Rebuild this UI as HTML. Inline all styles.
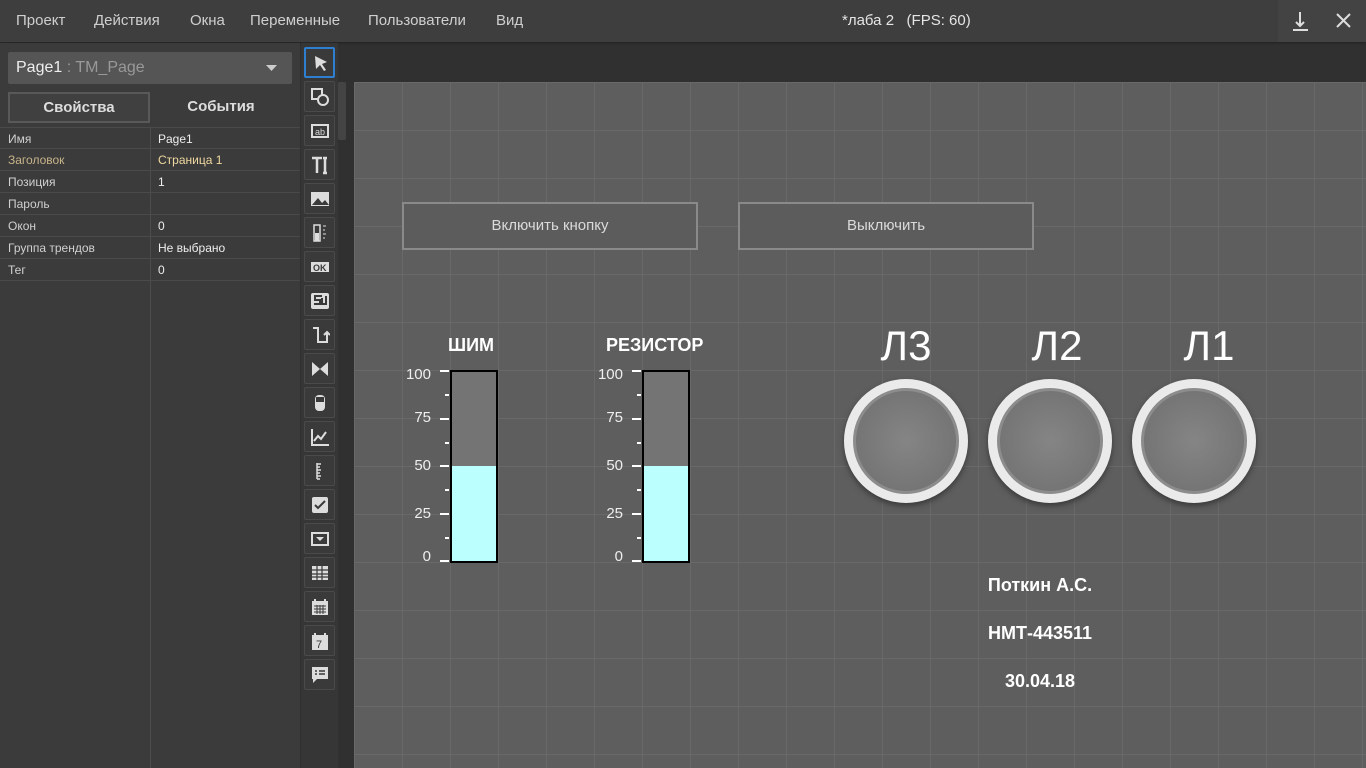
<!DOCTYPE html>
<html><head><meta charset="utf-8"><style>
*{margin:0;padding:0;box-sizing:border-box}
body{width:1366px;height:768px;overflow:hidden;background:#303030;font-family:"Liberation Sans",sans-serif;position:relative;color:#ddd}
.top{position:absolute;left:0;top:0;width:1366px;height:42px;background:#3e3e3e;box-shadow:0 1px 2px #222}
.top span{position:absolute;top:12px;font-size:15px;color:#cfcfcf}
.a{position:absolute}
.left{position:absolute;left:0;top:43px;width:300px;height:725px;background:#3b3b3b}
.row{position:absolute;left:0;width:300px;height:22px;border-bottom:1px solid #4a4a4a;font-size:12px}
.row b{position:absolute;left:8px;top:4px;font-weight:normal;color:#d0d0d0}
.row i{position:absolute;left:158px;top:4px;font-style:normal;color:#eee}
.tb{position:absolute;left:301px;top:43px;width:37px;height:725px;background:#363636}
.btn{position:absolute;left:304px;width:31px;height:31px;border:1px solid #4a4a4a;border-radius:2px;background:#3a3a3a}
.btn svg{position:absolute;left:5px;top:5px}
.canvas{position:absolute;left:354px;top:82px;width:1012px;height:686px;background-color:#5e5e5e;
background-image:linear-gradient(to right,#696969 1px,transparent 1px),linear-gradient(to bottom,#696969 1px,transparent 1px);background-size:48px 48px}
.pb{position:absolute;width:296px;height:48px;border:2px solid #8a8a8a;background:#5c5c5c;color:#dadada;font-size:15px;text-align:center;line-height:44px}
.ttl{position:absolute;font-size:18px;font-weight:bold;color:#fff}
.bar{position:absolute;width:48px;height:193px;border:2px solid #000;background:linear-gradient(to bottom,#747474 0,#747474 94px,#bbffff 94px)}
.lbl{position:absolute;width:30px;text-align:right;font-size:15px;color:#eee}
.tk{position:absolute;height:2px;background:#fff}
.lamp{position:absolute;width:124px;height:124px;border-radius:50%;background:radial-gradient(circle,#f4f4f4 0,#e8e8e8 80%,#aaa 100%);box-shadow:0 3px 6px #3a3a3a}
.lamp div{position:absolute;left:9px;top:9px;width:106px;height:106px;border-radius:50%;background:radial-gradient(circle at 50% 50%,#858585 0,#757575 70%,#6e6e6e 100%);border:3px solid #8c8c8c}
.L{position:absolute;font-size:42px;color:#fff;width:126px;text-align:center}
.inf{position:absolute;left:940px;width:200px;text-align:center;color:#fff;font-size:18px;font-weight:bold}
</style></head><body>
<div class="top">
<span style="left:16px">Проект</span><span style="left:94px">Действия</span><span style="left:190px">Окна</span><span style="left:250px">Переменные</span><span style="left:368px">Пользователи</span><span style="left:496px">Вид</span>
<span style="left:842px;color:#e5e5e5">*лаба 2 &nbsp; (FPS: 60)</span>
<div class="a" style="left:1278px;top:0;width:88px;height:42px;background:#434343"></div>
<svg class="a" style="left:1290px;top:10px" width="22" height="22"><path d="M10 2v14M6 12l4 4 4-4M3 20h15" stroke="#ddd" stroke-width="2" fill="none"/></svg>
<svg class="a" style="left:1335px;top:12px" width="18" height="18"><path d="M2 2l13 13M15 2L2 15" stroke="#ddd" stroke-width="2"/></svg>
</div>
<div class="left">
<div class="a" style="left:8px;top:9px;width:284px;height:32px;background:#555;border-radius:2px;font-size:16px;color:#eee;padding:7px 8px">Page1<span style="color:#999"> : TM_Page</span></div>
<svg class="a" style="left:266px;top:22px" width="12" height="8"><path d="M0 0h11L5.5 6z" fill="#ccc"/></svg>
<div class="a" style="left:8px;top:49px;width:142px;height:31px;border:2px solid #595959;background:#404040;font-size:15px;font-weight:bold;text-align:center;line-height:27px;color:#ddd">Свойства</div>
<div class="a" style="left:150px;top:49px;width:142px;height:31px;font-size:15px;font-weight:bold;text-align:center;line-height:29px;color:#ddd">События</div>
<div class="a" style="left:150px;top:84px;width:1px;height:641px;background:#4d4d4d"></div>
<div class="row" style="top:84px;border-top:1px solid #4a4a4a"><b>Имя</b><i>Page1</i></div>
<div class="row" style="top:106px"><b style="color:#c8b48a">Заголовок</b><i style="color:#f0d9a0">Страница 1</i></div>
<div class="row" style="top:128px"><b>Позиция</b><i>1</i></div>
<div class="row" style="top:150px"><b>Пароль</b><i></i></div>
<div class="row" style="top:172px"><b>Окон</b><i>0</i></div>
<div class="row" style="top:194px"><b>Группа трендов</b><i>Не выбрано</i></div>
<div class="row" style="top:216px"><b>Тег</b><i>0</i></div>
</div>
<div class="tb"></div>
<div class="a" style="left:338px;top:82px;width:8px;height:58px;background:#444;border-radius:2px"></div>
<div class="btn" style="top:47px;border:2px solid #2f7fd0"><svg width="20" height="20"><path d="M4 2l12 6-5 2 4 6-2 1-4-6-4 4z" fill="#ddd"/></svg></div>
<div class="btn" style="top:81px"><svg width="20" height="20"><rect x="2" y="2" width="10" height="10" fill="none" stroke="#ddd" stroke-width="2"/><circle cx="13" cy="13" r="5" fill="#3a3a3a" stroke="#ddd" stroke-width="2"/></svg></div>
<div class="btn" style="top:115px"><svg width="20" height="20"><rect x="2" y="4" width="16" height="12" fill="none" stroke="#ddd" stroke-width="2"/><text x="5" y="14" font-size="9" fill="#ddd">ab</text></svg></div>
<div class="btn" style="top:149px"><svg width="20" height="20"><path d="M2 3h10M7 3v15M15 3v15M13 3h4M13 18h4" stroke="#ddd" stroke-width="2.5" fill="none"/></svg></div>
<div class="btn" style="top:183px"><svg width="20" height="20"><rect x="1" y="3" width="18" height="14" fill="#ddd"/><path d="M2 16l6-7 4 5 3-3 4 5z" fill="#3a3a3a"/></svg></div>
<div class="btn" style="top:217px"><svg width="20" height="20"><rect x="4" y="2" width="6" height="16" fill="none" stroke="#ddd" stroke-width="1.5"/><rect x="5" y="10" width="4" height="8" fill="#ddd"/><path d="M13 3h3M13 7h2M13 11h3M13 15h2" stroke="#ddd"/></svg></div>
<div class="btn" style="top:251px"><svg width="20" height="20"><rect x="1" y="5" width="18" height="10" fill="#ddd"/><text x="3" y="14" font-size="9" font-weight="bold" fill="#3a3a3a">OK</text></svg></div>
<div class="btn" style="top:285px"><svg width="20" height="20"><rect x="1" y="2" width="18" height="16" rx="2" fill="#ddd"/><path d="M12 5H5v4h5v4H4M12 7v6h4V5" stroke="#3a3a3a" stroke-width="2" fill="none"/></svg></div>
<div class="btn" style="top:319px"><svg width="20" height="20"><path d="M3 3h5v14h9V8M14 10l3-3 3 3" stroke="#ddd" stroke-width="2" fill="none"/></svg></div>
<div class="btn" style="top:353px"><svg width="20" height="20"><path d="M2 3l8 7-8 7zM18 3l-8 7 8 7z" fill="#ddd"/></svg></div>
<div class="btn" style="top:387px"><svg width="20" height="20"><rect x="5" y="2" width="10" height="16" rx="4" fill="#ddd"/><rect x="6" y="4" width="8" height="5" fill="#3a3a3a"/></svg></div>
<div class="btn" style="top:421px"><svg width="20" height="20"><path d="M2 2v16h17M4 14l4-5 3 3 5-7" stroke="#ddd" stroke-width="2" fill="none"/></svg></div>
<div class="btn" style="top:455px"><svg width="20" height="20"><path d="M7 2v16M7 3h4M7 6h3M7 9h4M7 12h3M7 15h4M7 18h3" stroke="#ddd" stroke-width="1.5"/></svg></div>
<div class="btn" style="top:489px"><svg width="20" height="20"><rect x="2" y="2" width="16" height="16" rx="2" fill="#ddd"/><path d="M5 10l3 3 7-7" stroke="#3a3a3a" stroke-width="2" fill="none"/></svg></div>
<div class="btn" style="top:523px"><svg width="20" height="20"><rect x="2" y="4" width="16" height="12" fill="none" stroke="#ddd" stroke-width="2"/><path d="M6 8h8l-4 4z" fill="#ddd"/></svg></div>
<div class="btn" style="top:557px"><svg width="20" height="20"><rect x="2" y="3" width="16" height="14" fill="#ddd"/><path d="M2 7h16M2 11h16M2 14h16M7 3v14M12 3v14" stroke="#3a3a3a" stroke-width="1.2"/></svg></div>
<div class="btn" style="top:591px"><svg width="20" height="20"><rect x="2" y="4" width="16" height="14" fill="#ddd"/><path d="M5 2v4M15 2v4" stroke="#ddd" stroke-width="2"/><path d="M4 9h12M4 12h12M4 15h12M7 8v9M10 8v9M13 8v9" stroke="#3a3a3a"/></svg></div>
<div class="btn" style="top:625px"><svg width="20" height="20"><rect x="2" y="4" width="16" height="15" fill="#ddd"/><path d="M5 2v4M15 2v4" stroke="#ddd" stroke-width="2"/><text x="6" y="17" font-size="11" fill="#3a3a3a">7</text></svg></div>
<div class="btn" style="top:659px"><svg width="20" height="20"><path d="M2 2h16v12H7l-4 4v-4H2z" fill="#ddd"/><path d="M5 6h2M9 6h6M5 9h2M9 9h6" stroke="#3a3a3a" stroke-width="1.5"/></svg></div>
<div class="canvas"></div>
<div class="pb" style="left:402px;top:202px">Включить кнопку</div>
<div class="pb" style="left:738px;top:202px">Выключить</div>
<div class="ttl" style="left:448px;top:335px">ШИМ</div>
<div class="ttl" style="left:606px;top:335px">РЕЗИСТОР</div>
<div class="bar" style="left:450px;top:370px"></div>
<div class="bar" style="left:642px;top:370px"></div>
<div class="lbl" style="left:401px;top:366px">100</div><div class="lbl" style="left:401px;top:409px">75</div><div class="lbl" style="left:401px;top:457px">50</div><div class="lbl" style="left:401px;top:505px">25</div><div class="lbl" style="left:401px;top:548px">0</div>
<div class="lbl" style="left:593px;top:366px">100</div><div class="lbl" style="left:593px;top:409px">75</div><div class="lbl" style="left:593px;top:457px">50</div><div class="lbl" style="left:593px;top:505px">25</div><div class="lbl" style="left:593px;top:548px">0</div>
<div class="tk" style="left:440px;top:370px;width:9px"></div><div class="tk" style="left:445px;top:394px;width:4px"></div><div class="tk" style="left:440px;top:418px;width:9px"></div><div class="tk" style="left:445px;top:442px;width:4px"></div><div class="tk" style="left:440px;top:465px;width:9px"></div><div class="tk" style="left:445px;top:489px;width:4px"></div><div class="tk" style="left:440px;top:513px;width:9px"></div><div class="tk" style="left:445px;top:537px;width:4px"></div><div class="tk" style="left:440px;top:560px;width:9px"></div>
<div class="tk" style="left:632px;top:370px;width:9px"></div><div class="tk" style="left:637px;top:394px;width:4px"></div><div class="tk" style="left:632px;top:418px;width:9px"></div><div class="tk" style="left:637px;top:442px;width:4px"></div><div class="tk" style="left:632px;top:465px;width:9px"></div><div class="tk" style="left:637px;top:489px;width:4px"></div><div class="tk" style="left:632px;top:513px;width:9px"></div><div class="tk" style="left:637px;top:537px;width:4px"></div><div class="tk" style="left:632px;top:560px;width:9px"></div>
<div class="L" style="left:843px;top:322px">Л3</div>
<div class="L" style="left:994px;top:322px">Л2</div>
<div class="L" style="left:1146px;top:322px">Л1</div>
<div class="lamp" style="left:844px;top:379px"><div></div></div>
<div class="lamp" style="left:988px;top:379px"><div></div></div>
<div class="lamp" style="left:1132px;top:379px"><div></div></div>
<div class="inf" style="top:575px">Поткин А.С.</div>
<div class="inf" style="top:623px">НМТ-443511</div>
<div class="inf" style="top:671px">30.04.18</div>
</body></html>
